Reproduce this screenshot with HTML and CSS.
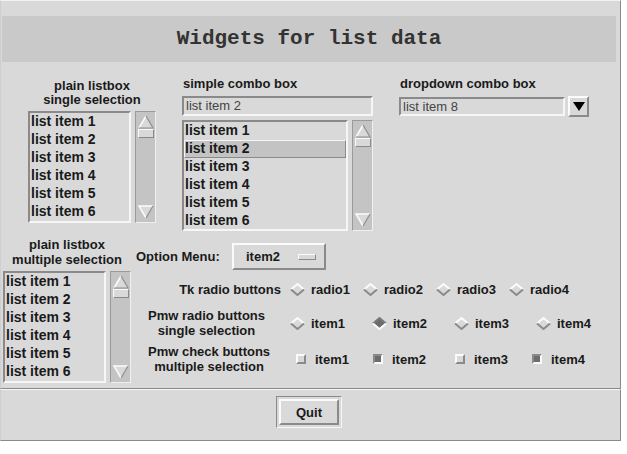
FILE: index.html
```html
<!DOCTYPE html>
<html lang="en">
<head>
  <meta charset="UTF-8" />
  <title>Widgets for list data</title>
  <link rel="stylesheet" href="styles.css">
</head>
<body>
  <div class="window">
    <div class="main">
      <div class="title">Widgets for list data</div>

      <div class="top-row">
        <!-- plain listbox, single selection -->
        <div class="group g-single">
          <div class="caption">plain listbox<br>single selection</div>
          <div class="lb-row">
            <div class="listbox lb-small">
              <div class="item">list item 1</div>
              <div class="item">list item 2</div>
              <div class="item">list item 3</div>
              <div class="item">list item 4</div>
              <div class="item">list item 5</div>
              <div class="item">list item 6</div>
            </div>
            <div class="scrollbar">
              <svg class="arrow" width="16" height="14" viewBox="0 0 16 14"><polygon points="8,1 15,13 1,13" fill="#d9d9d9"/><polyline points="1,13 8,1" stroke="#fbfbfb" stroke-width="1.5" fill="none"/><polyline points="8,1 15,13 1,13" stroke="#8e8e8e" stroke-width="1.2" fill="none"/></svg>
              <div class="thumb"></div>
              <div class="trough"></div>
              <svg class="arrow" width="16" height="14" viewBox="0 0 16 14"><polygon points="1,1 15,1 8,13" fill="#d9d9d9"/><polyline points="8,13 1,1 15,1" stroke="#fbfbfb" stroke-width="1.5" fill="none"/><polyline points="15,1 8,13" stroke="#8e8e8e" stroke-width="1.2" fill="none"/></svg>
            </div>
          </div>
        </div>

        <!-- simple combo box -->
        <div class="group g-combo">
          <div class="caption left">simple combo box</div>
          <div class="entry combo-entry">list item 2</div>
          <div class="lb-row">
            <div class="listbox lb-wide">
              <div class="item">list item 1</div>
              <div class="item selected">list item 2</div>
              <div class="item">list item 3</div>
              <div class="item">list item 4</div>
              <div class="item">list item 5</div>
              <div class="item">list item 6</div>
            </div>
            <div class="scrollbar short">
              <svg class="arrow" width="16" height="14" viewBox="0 0 16 14"><polygon points="8,1 15,13 1,13" fill="#d9d9d9"/><polyline points="1,13 8,1" stroke="#fbfbfb" stroke-width="1.5" fill="none"/><polyline points="8,1 15,13 1,13" stroke="#8e8e8e" stroke-width="1.2" fill="none"/></svg>
              <div class="thumb"></div>
              <div class="trough"></div>
              <svg class="arrow" width="16" height="14" viewBox="0 0 16 14"><polygon points="1,1 15,1 8,13" fill="#d9d9d9"/><polyline points="8,13 1,1 15,1" stroke="#fbfbfb" stroke-width="1.5" fill="none"/><polyline points="15,1 8,13" stroke="#8e8e8e" stroke-width="1.2" fill="none"/></svg>
            </div>
          </div>
        </div>

        <!-- dropdown combo box -->
        <div class="group g-dropdown">
          <div class="caption left">dropdown combo box</div>
          <div class="dd-row">
            <div class="entry dd-entry">list item 8</div>
            <div class="dd-button">
              <svg width="12" height="9" viewBox="0 0 12 9"><polygon points="0,0 12,0 6,9" fill="#000"/></svg>
            </div>
          </div>
        </div>
      </div>

      <div class="bottom-row">
        <!-- plain listbox, multiple selection -->
        <div class="group g-multi">
          <div class="caption tall">plain listbox<br>multiple selection</div>
          <div class="lb-row">
            <div class="listbox lb-small">
              <div class="item">list item 1</div>
              <div class="item">list item 2</div>
              <div class="item">list item 3</div>
              <div class="item">list item 4</div>
              <div class="item">list item 5</div>
              <div class="item">list item 6</div>
            </div>
            <div class="scrollbar">
              <svg class="arrow" width="16" height="14" viewBox="0 0 16 14"><polygon points="8,1 15,13 1,13" fill="#d9d9d9"/><polyline points="1,13 8,1" stroke="#fbfbfb" stroke-width="1.5" fill="none"/><polyline points="8,1 15,13 1,13" stroke="#8e8e8e" stroke-width="1.2" fill="none"/></svg>
              <div class="thumb"></div>
              <div class="trough"></div>
              <svg class="arrow" width="16" height="14" viewBox="0 0 16 14"><polygon points="1,1 15,1 8,13" fill="#d9d9d9"/><polyline points="8,13 1,1 15,1" stroke="#fbfbfb" stroke-width="1.5" fill="none"/><polyline points="15,1 8,13" stroke="#8e8e8e" stroke-width="1.2" fill="none"/></svg>
            </div>
          </div>
        </div>

        <div class="controls">
          <div class="option-row">
            <span class="option-label">Option Menu:</span>
            <div class="option-button">
              <span>item2</span>
              <span class="option-mark"></span>
            </div>
          </div>

          <div class="choice-row tk-row">
            <div class="row-label right">Tk radio buttons</div>
            <div class="choices">
              <div class="choice tk"><span class="diamond"></span>radio1</div>
              <div class="choice tk"><span class="diamond"></span>radio2</div>
              <div class="choice tk"><span class="diamond"></span>radio3</div>
              <div class="choice tk"><span class="diamond"></span>radio4</div>
            </div>
          </div>

          <div class="choice-row pmw-row">
            <div class="row-label"><span>Pmw radio buttons<br>single selection</span></div>
            <div class="choices">
              <div class="choice pmw"><span class="diamond"></span>item1</div>
              <div class="choice pmw"><span class="diamond on"></span>item2</div>
              <div class="choice pmw"><span class="diamond"></span>item3</div>
              <div class="choice pmw"><span class="diamond"></span>item4</div>
            </div>
          </div>

          <div class="choice-row check-row">
            <div class="row-label"><span>Pmw check buttons<br>multiple selection</span></div>
            <div class="choices">
              <div class="choice chk c1"><span class="box"></span>item1</div>
              <div class="choice chk c2"><span class="box on"></span>item2</div>
              <div class="choice chk c3"><span class="box"></span>item3</div>
              <div class="choice chk"><span class="box on"></span>item4</div>
            </div>
          </div>
        </div>
      </div>
    </div>

    <div class="buttons">
      <div class="default-ring">
        <button class="quit">Quit</button>
      </div>
    </div>
  </div>

  <script>
    // diamonds are drawn from one template so every indicator looks alike
    document.querySelectorAll('.diamond').forEach(function (d) {
      var on = d.classList.contains('on');
      var top = on ? '#7a7a7a' : '#fbfbfb';
      var bottom = on ? '#fbfbfb' : '#8a8a8a';
      var fill = on ? '#6c6c6c' : '#d9d9d9';
      d.innerHTML =
        '<svg width="15" height="13" viewBox="0 0 15 13">' +
        '<polygon points="7.5,1 14,6.5 7.5,12 1,6.5" fill="' + fill + '"/>' +
        '<polyline points="1,6.5 7.5,1 14,6.5" stroke="' + top + '" stroke-width="2" fill="none"/>' +
        '<polyline points="1,6.5 7.5,12 14,6.5" stroke="' + bottom + '" stroke-width="2" fill="none"/>' +
        '</svg>';
    });
  </script>
</body>
</html>
```

FILE: styles.css
```css
* {
    box-sizing: border-box;
    margin: 0;
    padding: 0;
}

body {
    background: #ffffff;
    font-family: "Liberation Sans", Arial, sans-serif;
    font-weight: bold;
    font-size: 13px;
    color: #1a1a1a;
}

.window {
    width: 621px;
    height: 441px;
    display: flex;
    flex-direction: column;
    background: #d9d9d9;
}

.main {
    height: 389px;
    border: 1px solid;
    border-color: #f2f2f2 #8a8a8a #8a8a8a #cfcfcf;
    padding: 15px 4px 0 1px;
}

.title {
    height: 46px;
    line-height: 46px;
    background: #c9c9c9;
    text-align: center;
    font-family: "Liberation Mono", "Courier New", monospace;
    font-size: 21px;
    font-weight: bold;
    color: #333;
}

/* ---- top row ---- */
.top-row {
    display: flex;
    align-items: flex-start;
    gap: 26px;
    margin-top: 15px;
    padding-left: 26px;
}

.group {
    display: flex;
    flex-direction: column;
}

.caption {
    line-height: 14px;
    text-align: center;
}

.caption.left {
    text-align: left;
    padding-left: 1px;
}

.caption.tall {
    line-height: 15px;
}

.g-single {
    width: 128px;
    padding-top: 2px;
}

.g-combo {
    width: 191px;
}

.g-dropdown {
    width: 190px;
}

.lb-row {
    display: flex;
    gap: 4px;
    margin-top: 4px;
}

.listbox {
    height: 112px;
    border: 2px solid;
    border-color: #8a8a8a #f6f6f6 #f6f6f6 #8a8a8a;
    font-size: 14px;
    line-height: 16px;
    overflow: hidden;
}

.lb-small {
    width: 103px;
}

.lb-wide {
    width: 166px;
    height: 111px;
}

.item {
    height: 18px;
    padding-left: 1px;
    white-space: nowrap;
}

.item.selected {
    background: #c3c3c3;
    border: 1px solid;
    border-color: #f6f6f6 #8a8a8a #8a8a8a #f6f6f6;
    line-height: 15px;
    padding-left: 0;
}

.scrollbar {
    width: 21px;
    height: 112px;
    background: #c4c4c4;
    border: 1px solid;
    border-color: #9a9a9a #f0f0f0 #f0f0f0 #9a9a9a;
    display: flex;
    flex-direction: column;
    align-items: center;
    padding: 3px 0 3px;
}

.scrollbar.short {
    height: 111px;
}

.arrow {
    display: block;
    flex: none;
}

.thumb {
    width: 16px;
    height: 9px;
    background: #d9d9d9;
    border: 1px solid;
    border-color: #fbfbfb #8a8a8a #8a8a8a #fbfbfb;
    flex: none;
}

.trough {
    flex: 1;
}

.entry {
    border: 2px solid;
    border-color: #8a8a8a #f6f6f6 #f6f6f6 #8a8a8a;
    font-weight: normal;
    font-size: 13px;
    color: #444;
    padding-left: 2px;
    white-space: nowrap;
}

.combo-entry {
    margin-top: 5px;
    height: 20px;
    line-height: 16px;
}

.dd-row {
    display: flex;
    align-items: flex-start;
    margin-top: 5px;
}

.dd-entry {
    width: 166px;
    height: 19px;
    line-height: 15px;
    margin-top: 1px;
}

.dd-button {
    width: 21px;
    height: 21px;
    margin-left: 3px;
    border: 2px solid;
    border-color: #fbfbfb #8a8a8a #8a8a8a #fbfbfb;
    display: flex;
    align-items: center;
    justify-content: center;
}

/* ---- bottom row ---- */
.bottom-row {
    display: flex;
    align-items: flex-start;
    padding-left: 1px;
    padding-top: 6px;
}

.g-multi {
    width: 128px;
}

.controls {
    margin-left: 5px;
    display: flex;
    flex-direction: column;
}

.option-row {
    display: flex;
    align-items: center;
    margin-top: 6px;
    height: 27px;
}

.option-label {
    width: 96px;
}

.option-button {
    width: 94px;
    height: 27px;
    border: 2px solid;
    border-color: #fbfbfb #8a8a8a #8a8a8a #fbfbfb;
    display: flex;
    align-items: center;
    padding-left: 12px;
}

.option-mark {
    width: 18px;
    height: 6px;
    margin-left: 18px;
    border: 1px solid;
    border-color: #fbfbfb #8a8a8a #8a8a8a #fbfbfb;
}

.choice-row {
    display: flex;
    align-items: center;
}

.tk-row {
    height: 24px;
    margin-top: 7px;
}

.pmw-row {
    height: 30px;
    margin-top: 7px;
}

.check-row {
    height: 30px;
    margin-top: 6px;
}

.row-label {
    width: 154px;
    line-height: 15px;
    padding-left: 12px;
}

.row-label span {
    display: inline-block;
    text-align: center;
}

.row-label.right {
    text-align: right;
    padding-right: 9px;
}

.choices {
    display: flex;
    align-items: center;
}

.choice {
    display: flex;
    align-items: center;
    white-space: nowrap;
}

.choice.tk {
    width: 73px;
}

.choice.pmw {
    width: 82px;
}

.choice.c1,
.choice.c3 {
    width: 77px;
}

.choice.c2 {
    width: 82px;
}

.diamond {
    display: block;
    width: 15px;
    height: 13px;
    margin-right: 6px;
}

.diamond svg {
    display: block;
}

.box {
    display: block;
    width: 10px;
    height: 10px;
    margin: 0 9px 0 6px;
    border: 2px solid;
    border-color: #fbfbfb #8a8a8a #8a8a8a #fbfbfb;
}

.box.on {
    background: #6c6c6c;
    border-color: #8a8a8a #fbfbfb #fbfbfb #8a8a8a;
}

/* ---- button bar ---- */
.buttons {
    flex: 1;
    border: 1px solid;
    border-color: #f6f6f6 #8a8a8a #8a8a8a #cfcfcf;
    display: flex;
    justify-content: center;
    align-items: flex-start;
    padding-top: 6px;
    padding-right: 3px;
}

.default-ring {
    width: 66px;
    height: 32px;
    border: 1px solid;
    border-color: #8a8a8a #f6f6f6 #f6f6f6 #8a8a8a;
    padding: 2px;
}

.quit {
    width: 100%;
    height: 100%;
    background: #d9d9d9;
    border: 2px solid;
    border-color: #fbfbfb #8a8a8a #8a8a8a #fbfbfb;
    font-family: "Liberation Sans", Arial, sans-serif;
    font-weight: bold;
    font-size: 13px;
    color: #1a1a1a;
}
```
